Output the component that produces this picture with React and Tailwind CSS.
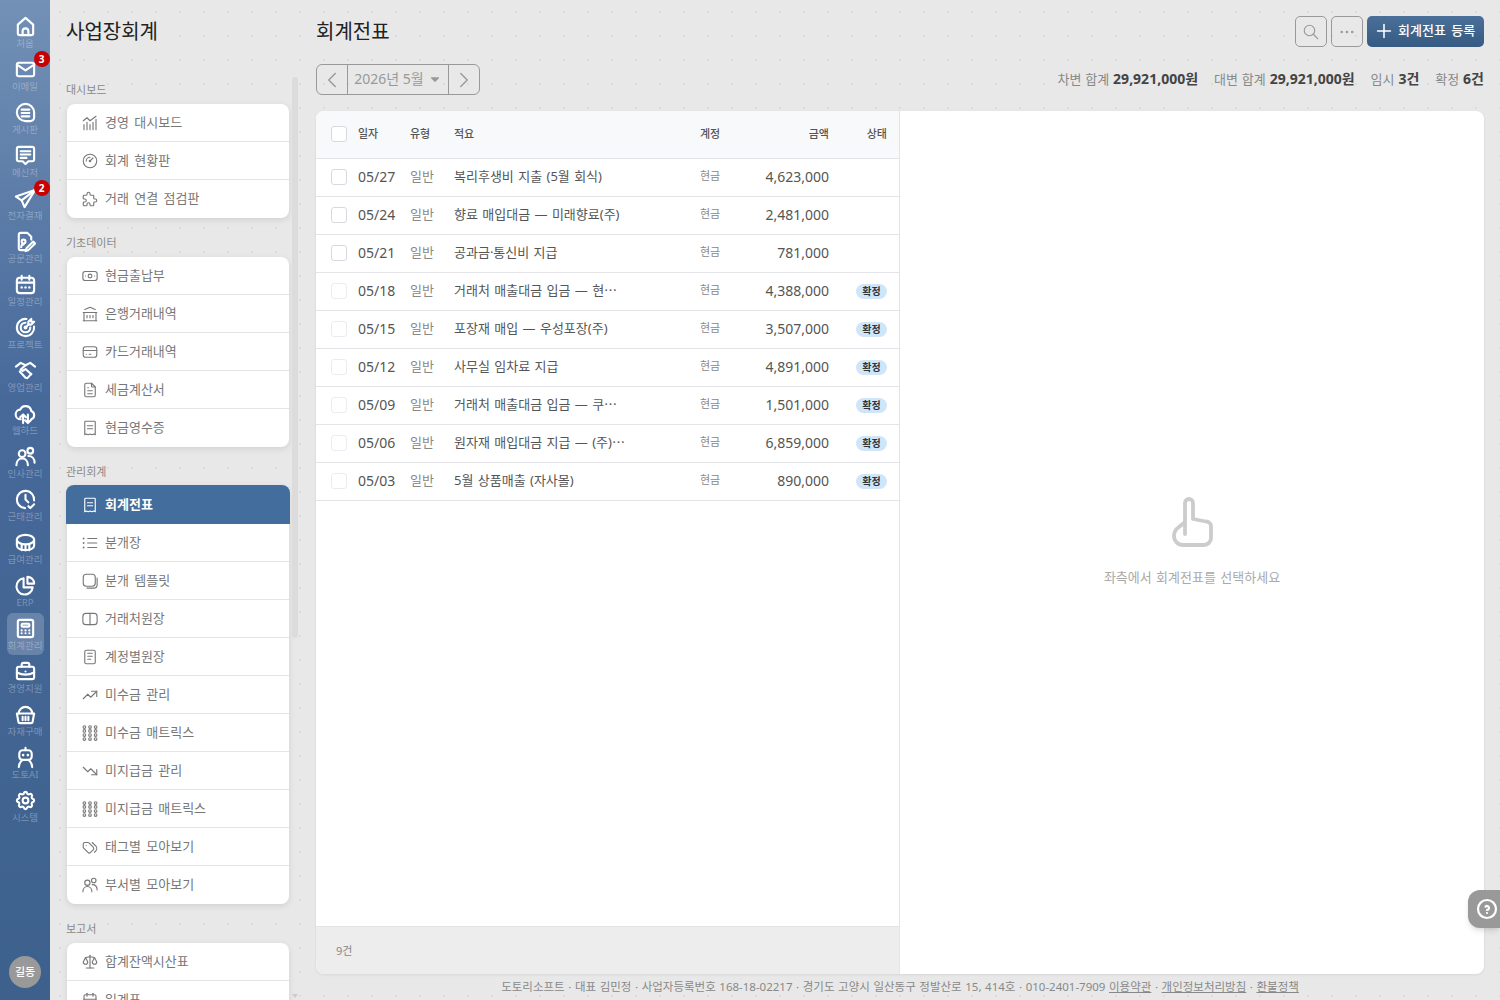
import React from 'react';
import {
  TbMail, TbTargetArrow, TbClockCheck, TbCalculator, TbBriefcase, TbSettings, TbGauge, TbPuzzle,
  TbBuildingBank, TbCreditCard, TbFileText, TbNotes, TbTrendingUp, TbTrendingDown, TbTags,
  TbScale, TbCalendar, TbSearch, TbDots, TbPlus, TbChevronLeft, TbChevronRight, TbHelpCircle, TbCaretDownFilled,
} from 'react-icons/tb';

// tabler-style wrapper for the icons the packages don't have
function Ic({ className, strokeWidth = 2, children }) {
  return (
    <svg className={className} viewBox="0 0 24 24" fill="none" stroke="currentColor" strokeWidth={strokeWidth} strokeLinecap="round" strokeLinejoin="round">
      {children}
    </svg>
  );
}

const HomeIc = (p) => <Ic {...p}><path d="M4 10l8-7 8 7v9a2 2 0 0 1-2 2H6a2 2 0 0 1-2-2z" /><path d="M9 21v-4a3 3 0 0 1 6 0v4" /></Ic>;
const BoardIc = (p) => <Ic {...p}><path d="M12 3a9 9 0 0 1 9 9v5a4 4 0 0 1-4 4h-5a9 9 0 0 1 0-18z" /><path d="M8 9h8M8 12.5h8M8 16h8" /></Ic>;
const ChatIc = (p) => <Ic {...p}><path d="M5 3h14a2 2 0 0 1 2 2v11a2 2 0 0 1-2 2h-4l-3 3-3-3H5a2 2 0 0 1-2-2V5a2 2 0 0 1 2-2z" /><path d="M7 7.5h10M7 11h10M7 14.5h6" /></Ic>;
const PlaneIc = (p) => <Ic {...p}><path d="M22 3L2 10l6 4 3 7z" /><path d="M22 3L8 14" /></Ic>;
const DocSignIc = (p) => <Ic {...p}><path d="M11 21H7a2 2 0 0 1-2-2V5a2 2 0 0 1 2-2h7l4 4v3" /><circle cx="10" cy="12" r="2" /><path d="M7.5 18c0-1.500 1-3 2.500-3" /><path d="M20 12l-7 7-1 3 3-1 7-7z" /></Ic>;
const CalDotsIc = (p) => <Ic {...p}><rect x="3" y="5" width="18" height="16" rx="3" /><path d="M8 3v4M16 3v4M3 10h18" /><path d="M8 15h.01M12 15h.01M16 15h.01" strokeWidth="2.600" /></Ic>;
const ShakeIc = (p) => <Ic {...p}><path d="M2 8l5-4 5 2.500 5-2.500 5 4" /><path d="M12 6.500L7 11l2 1.500 3-2 6 5.500" /><path d="M6 13l6 6.500 2 .500 4-4.500" /></Ic>;
const CloudIc = (p) => <Ic {...p}><path d="M7 18a5 5 0 0 1-.5-10 6 6 0 0 1 11.500 1.500A4.500 4.500 0 0 1 18 18" /><path d="M9.500 22v-9M6.500 16l3-3 3 3" /><path d="M14.500 13v9M11.500 19l3 3 3-3" /></Ic>;
const UsersIc = (p) => <Ic {...p}><circle cx="8.500" cy="9" r="3.500" /><circle cx="17" cy="6" r="3" /><path d="M2.500 21c0-4 2.500-7 6-7s6 3 6 7" /><path d="M15 11.500c4 0 6.500 3 6.500 7" /></Ic>;
const CoinIc = (p) => <Ic {...p}><ellipse cx="12" cy="9" rx="9" ry="5" /><path d="M3 9v6c0 3 4 5 9 5s9-2 9-5V9" /><path d="M8 14v6M12 15v5M16 14v6" /></Ic>;
const PieIc = (p) => <Ic {...p}><path d="M10 4.500a8.500 8.500 0 1 0 9.500 9.500H10z" /><path d="M14 3a7 7 0 0 1 7 7h-7z" /></Ic>;
const BasketIc = (p) => <Ic {...p}><path d="M3 11h18l-1.500 8a2 2 0 0 1-2 2h-11a2 2 0 0 1-2-2z" /><path d="M5 11a7 7 0 0 1 14 0" /><path d="M9 14.500v3.500M12 14.500v3.500M15 14.500v3.500" /></Ic>;
const RobotIc = (p) => <Ic {...p}><rect x="5.500" y="4.500" width="13" height="10" rx="3.500" /><path d="M12 2v2.500" /><path d="M9.500 9.500h.01M14.500 9.500h.01" strokeWidth="2.800" /><path d="M5 22c0-3.500 2-6 4-7.500M19 22c0-3.500-2-6-4-7.500" /></Ic>;
const HistoIc = (p) => <Ic {...p}><path d="M4 21v-7M8 21v-10M12 21v-7M16 21v-10M20 21v-14" /><path d="M3 9l5-4 4 4 8-6" /></Ic>;
const CashIc = (p) => <Ic {...p}><rect x="2.500" y="6" width="19" height="12" rx="3" /><circle cx="12" cy="12" r="2.500" /><path d="M6 12h.01M18 12h.01" /></Ic>;
const ReceiptIc = (p) => <Ic {...p}><path d="M6 3h12a1 1 0 0 1 1 1v17l-2-1-2.500 1-2.500-1-2.500 1-2.500-1-2 1V4a1 1 0 0 1 1-1z" /><path d="M8.500 9h7M8.500 13h7" /></Ic>;
const ListIc = (p) => <Ic {...p}><path d="M9 6h12M9 12h12M9 18h12" /><path d="M3.500 6h.01M3.500 12h.01M3.500 18h.01" strokeWidth="2.400" /></Ic>;
const TemplateIc = (p) => <Ic {...p}><rect x="3" y="3" width="16" height="16" rx="4" /><path d="M21.500 8v9a4.500 4.500 0 0 1-4.500 4.500H8" /></Ic>;
const BookIc = (p) => <Ic {...p}><rect x="2.500" y="4.500" width="19" height="15" rx="4" /><path d="M12 4.500v15" /></Ic>;
const DotsGridIc = (p) => (
  <Ic {...p} strokeWidth={1.4}>
    {[4, 9.300, 14.700, 20].map((y) => [4.5, 12, 19.500].map((x) => <circle key={x + '-' + y} cx={x} cy={y} r="1.800" />))}
  </Ic>
);

const rail = [
  { icon: HomeIc, label: '처음' },
  { icon: TbMail, label: '이메일', badge: 3 },
  { icon: BoardIc, label: '게시판' },
  { icon: ChatIc, label: '메신저' },
  { icon: PlaneIc, label: '전자결재', badge: 2 },
  { icon: DocSignIc, label: '공문관리' },
  { icon: CalDotsIc, label: '일정관리' },
  { icon: TbTargetArrow, label: '프로젝트' },
  { icon: ShakeIc, label: '영업관리' },
  { icon: CloudIc, label: '웹하드' },
  { icon: UsersIc, label: '인사관리' },
  { icon: TbClockCheck, label: '근태관리' },
  { icon: CoinIc, label: '급여관리' },
  { icon: PieIc, label: 'ERP' },
  { icon: TbCalculator, label: '회계관리', active: true },
  { icon: TbBriefcase, label: '경영지원' },
  { icon: BasketIc, label: '자재구매' },
  { icon: RobotIc, label: '도토AI' },
  { icon: TbSettings, label: '시스템' },
];

const groups = [
  { title: '대시보드', items: [
    { icon: HistoIc, label: '경영 대시보드' },
    { icon: TbGauge, label: '회계 현황판' },
    { icon: TbPuzzle, label: '거래 연결 점검판' },
  ] },
  { title: '기초데이터', items: [
    { icon: CashIc, label: '현금출납부' },
    { icon: TbBuildingBank, label: '은행거래내역' },
    { icon: TbCreditCard, label: '카드거래내역' },
    { icon: TbFileText, label: '세금계산서' },
    { icon: ReceiptIc, label: '현금영수증' },
  ] },
  { title: '관리회계', items: [
    { icon: ReceiptIc, label: '회계전표', active: true },
    { icon: ListIc, label: '분개장' },
    { icon: TemplateIc, label: '분개 템플릿' },
    { icon: BookIc, label: '거래처원장' },
    { icon: TbNotes, label: '계정별원장' },
    { icon: TbTrendingUp, label: '미수금 관리' },
    { icon: DotsGridIc, label: '미수금 매트릭스' },
    { icon: TbTrendingDown, label: '미지급금 관리' },
    { icon: DotsGridIc, label: '미지급금 매트릭스' },
    { icon: TbTags, label: '태그별 모아보기' },
    { icon: UsersIc, label: '부서별 모아보기' },
  ] },
  { title: '보고서', items: [
    { icon: TbScale, label: '합계잔액시산표' },
    { icon: TbCalendar, label: '일계표' },
  ] },
];

const rows = [
  ['05/27', '복리후생비 지출 (5월 회식)', '4,623,000', false],
  ['05/24', '향료 매입대금 — 미래향료(주)', '2,481,000', false],
  ['05/21', '공과금·통신비 지급', '781,000', false],
  ['05/18', '거래처 매출대금 입금 — 현⋯', '4,388,000', true],
  ['05/15', '포장재 매입 — 우성포장(주)', '3,507,000', true],
  ['05/12', '사무실 임차료 지급', '4,891,000', true],
  ['05/09', '거래처 매출대금 입금 — 쿠⋯', '1,501,000', true],
  ['05/06', '원자재 매입대금 지급 — (주)⋯', '6,859,000', true],
  ['05/03', '5월 상품매출 (자사몰)', '890,000', true],
];

function Rail() {
  return (
    <aside className="w-[50px] h-full shrink-0 flex flex-col items-center pt-[11px] bg-gradient-to-b from-[#7391b6] via-[#47699a] via-40% to-[#3d618c]">
      <div className="flex flex-col gap-px">
        {rail.map((r) => (
          <div key={r.label} className={`relative w-[37px] h-[42px] flex flex-col items-center pt-[4px] rounded-md ${r.active ? 'bg-white/20' : ''}`}>
            <r.icon className="w-[23px] h-[23px] shrink-0 text-white" strokeWidth={2.2} />
            <span className="text-[9.5px] leading-[11px] whitespace-nowrap text-white/30">{r.label}</span>
            {r.badge && (
              <span className="absolute -top-[3px] left-[27px] w-[16px] h-[16px] rounded-full bg-[#c80000] text-white text-[10px] font-bold flex items-center justify-center">{r.badge}</span>
            )}
          </div>
        ))}
      </div>
      <div className="mt-auto mb-[12px] w-8 h-8 rounded-full bg-[#999999] text-white text-[11px] font-medium flex items-center justify-center">길동</div>
    </aside>
  );
}

function SideNav() {
  return (
    <div className="w-[250px] h-full shrink-0 flex flex-col overflow-hidden">
      <h2 className="pl-4 pt-[18px] h-[65px] shrink-0 text-[20px] leading-[28px] font-normal text-[#222222]">사업장회계</h2>
      <div className="flex flex-1 min-h-0 overflow-hidden">
        <div className="w-[240px] pl-4 shrink-0">
          {groups.map((g) => (
            <div key={g.title}>
              <div className="h-[39px] pt-[17px] text-[11px] leading-[16px] text-[#888888]">{g.title}</div>
              <div className="rounded-lg bg-white shadow-[0_2px_6px_rgba(0,0,0,0.1)] mx-px">
                {g.items.map((it) => (
                  <div key={it.label} className={`flex items-center gap-[6px] ${it.active ? 'h-[39px] -mt-px bg-[#436d9c] text-white font-bold -mx-px rounded-t-lg pl-[15px]' : 'h-[38px] pl-[14px] text-[#777777] border-b border-[#e3e3e8] last:border-b-0'}`}>
                    <it.icon className="w-[18px] h-[18px] shrink-0" strokeWidth={1.5} />
                    <span className="text-[13px] [word-spacing:2px]">{it.label}</span>
                  </div>
                ))}
              </div>
            </div>
          ))}
        </div>
        <div className="ml-[2px] w-[6px] h-full pt-[12px] flex flex-col items-center">
          <div className="w-full h-[561px] rounded-full bg-[#dcdcdc]"></div>
          <div className="mt-auto mb-[2px] w-0 h-0 border-x-[3px] border-x-transparent border-t-[4px] border-t-[#cccccc]"></div>
        </div>
      </div>
    </div>
  );
}

function Main() {
  const num = 'text-[14px] text-[#444444] font-bold';
  return (
    <main className="flex-1 min-w-0 h-full flex flex-col pl-4 pr-4 pt-4">
      <div className="flex items-center justify-between h-[31px] shrink-0">
        <h1 className="text-[20px] font-normal text-[#222222]">회계전표</h1>
        <div className="flex items-center gap-1">
          <button className="w-8 h-[31px] rounded-[5px] border border-[#999999] flex items-center justify-center text-[#999999]"><TbSearch size={18} strokeWidth={1.5} /></button>
          <button className="w-8 h-[31px] rounded-[5px] border border-[#999999] flex items-center justify-center text-[#999999]"><TbDots size={18} strokeWidth={1.5} /></button>
          <button className="w-[117px] h-[31px] pb-px rounded-[5px] bg-gradient-to-b from-[#4a7099] to-[#365a82] text-white text-[13px] font-medium flex items-center pl-[6px] gap-[3px] whitespace-nowrap [word-spacing:2px]"><TbPlus size={22} strokeWidth={1.700} />회계전표 등록</button>
        </div>
      </div>
      <div className="flex items-center justify-between h-[31px] mt-[17px] shrink-0">
        <div className="w-[164px] h-[31px] flex rounded-md border border-[#999999] text-[#999999]">
          <div className="w-[31px] flex items-center justify-center border-r border-[#999999]"><TbChevronLeft size={26} strokeWidth={1.300} /></div>
          <div className="flex-1 flex items-center justify-center gap-[4px] pb-[2px] text-[14px]">2026년 5월<TbCaretDownFilled size={14} /></div>
          <div className="w-[31px] flex items-center justify-center border-l border-[#999999]"><TbChevronRight size={26} strokeWidth={1.300} /></div>
        </div>
        <div className="flex items-center gap-4 pb-[2px] text-[13px] text-[#888888] [word-spacing:0.500px]">
          <span>차변 합계 <b className={num}>29,921,000원</b></span>
          <span>대변 합계 <b className={num}>29,921,000원</b></span>
          <span>임시 <b className={num}>3건</b></span>
          <span>확정 <b className={num}>6건</b></span>
        </div>
      </div>
      <div className="flex flex-1 min-h-0 mt-4 rounded-lg bg-white shadow-[0_1px_3px_rgba(0,0,0,0.08)] overflow-hidden">
        <section className="w-[584px] shrink-0 flex flex-col border-r border-[#e3e3e8]">
          <div className="h-[48px] shrink-0 flex items-center pl-[15px] bg-[#f8f9fb] border-b border-[#e3e3e8] text-[11px] font-medium text-[#555555]">
            <span className="w-4 h-4 -mt-[2px] rounded-[3px] border border-[#d8d8e0] bg-white"></span>
            <span className="w-[52px] ml-[11px]">일자</span>
            <span className="w-[44px]">유형</span>
            <span className="w-[246px]">적요</span>
            <span className="w-[40px]">계정</span>
            <span className="w-[89px] text-right">금액</span>
            <span className="w-[58px] text-right">상태</span>
          </div>
          {rows.map(([date, memo, amount, done]) => (
            <div key={date} className="h-[38px] shrink-0 flex items-center pl-[15px] pb-[2px] border-b border-[#e3e3e8]">
              <span className={`w-4 h-4 shrink-0 rounded-[3px] border ${done ? 'border-[#ececf0]' : 'border-[#d8d8e0]'}`}></span>
              <span className="w-[52px] ml-[11px] text-[14px] text-[#555555]">{date}</span>
              <span className="w-[44px] text-[13px] text-[#888888]">일반</span>
              <span className="w-[246px] text-[13px] text-[#555555] whitespace-nowrap [word-spacing:1px]">{memo}</span>
              <span className="w-[40px] text-[11px] text-[#888888] -mt-px">현금</span>
              <span className="w-[89px] text-right text-[14px] text-[#555555]">{amount}</span>
              <span className="w-[58px] flex justify-end mt-[2px]">
                {done && <span className="w-[31px] h-[15px] rounded-full bg-[#cfe6fa] text-[#333333] text-[10px] font-bold flex items-center justify-center">확정</span>}
              </span>
            </div>
          ))}
          <div className="flex-1"></div>
          <div className="h-[48px] shrink-0 flex items-center pl-5 pt-[2px] bg-[#ededed] border-t border-[#e3e3e8] text-[11px] text-[#888888]">9건</div>
        </section>
        <section className="flex-1 flex flex-col items-center pt-[385px]">
          <svg width="44" height="52" viewBox="0 0 44 52" fill="none" stroke="#cccccc" strokeWidth="3.800" strokeLinecap="round" strokeLinejoin="round">
            <path d="M15 38V7a4 4 0 0 1 8 0v16l13 2.500a5 5 0 0 1 5 5V42a7 7 0 0 1-7 7H13a9 9 0 0 1-9-9c0-4 2-7 5-9l6-5" />
          </svg>
          <p className="mt-[20px] text-[13px] text-[#aaaaaa] [word-spacing:1px]">좌측에서 회계전표를 선택하세요</p>
        </section>
      </div>
      <footer className="h-[26px] shrink-0 flex items-center justify-center text-[11.5px] text-[#888888] whitespace-nowrap [word-spacing:0.600px]">
        <span>도토리소프트 · 대표 김민정 · 사업자등록번호 168-18-02217 · 경기도 고양시 일산동구 정발산로 15, 414호 · 010-2401-7909 <u>이용약관</u> · <u>개인정보처리방침</u> · <u>환불정책</u></span>
      </footer>
    </main>
  );
}

export default function App() {
  return (
    <div className="relative w-full h-screen overflow-hidden flex bg-[#e8e8e8] bg-[radial-gradient(circle,rgba(0,0,0,0.05)_1px,transparent_1px)] bg-[length:24px_24px] font-['Noto_Sans','Noto_Sans_CJK_KR',sans-serif]">
      <Rail />
      <SideNav />
      <Main />
      <button className="absolute right-0 top-[890px] w-8 h-[38px] rounded-l-xl bg-[#999999] text-white flex items-center pl-[7px] shadow-md">
        <TbHelpCircle size={24} strokeWidth={2.200} />
      </button>
    </div>
  );
}
